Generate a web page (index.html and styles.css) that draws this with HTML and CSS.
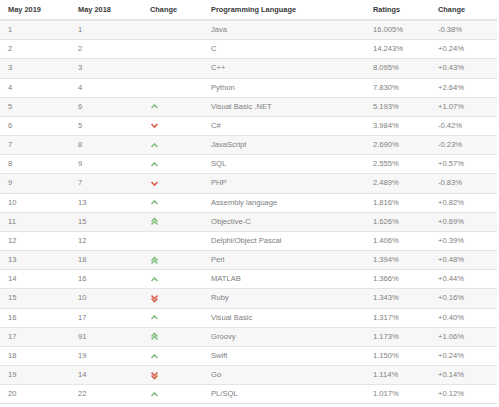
FILE: index.html
```html
<!DOCTYPE html>
<html>
<head>
<meta charset="utf-8">
<link rel="stylesheet" href="styles.css">
</head>
<body>
<table class="tiobe">
<colgroup>
<col class="c1"><col class="c2"><col class="c3"><col class="c4"><col class="c5"><col class="c6">
</colgroup>
<thead>
<tr><th>May 2019</th><th>May 2018</th><th>Change</th><th>Programming Language</th><th>Ratings</th><th>Change</th></tr>
</thead>
<tbody>
<tr><td>1</td><td>1</td><td></td><td>Java</td><td>16.005%</td><td>-0.38%</td></tr>
<tr><td>2</td><td>2</td><td></td><td>C</td><td>14.243%</td><td>+0.24%</td></tr>
<tr><td>3</td><td>3</td><td></td><td>C++</td><td>8.095%</td><td>+0.43%</td></tr>
<tr><td>4</td><td>4</td><td></td><td>Python</td><td>7.830%</td><td>+2.64%</td></tr>
<tr><td>5</td><td>6</td><td><svg class="ic up" viewBox="0 0 9 9"><path d="M1.5 6 L4.5 3 L7.5 6"/></svg></td><td>Visual Basic .NET</td><td>5.193%</td><td>+1.07%</td></tr>
<tr><td>6</td><td>5</td><td><svg class="ic dn" viewBox="0 0 9 9"><path d="M1.5 3 L4.5 6 L7.5 3"/></svg></td><td>C#</td><td>3.984%</td><td>-0.42%</td></tr>
<tr><td>7</td><td>8</td><td><svg class="ic up" viewBox="0 0 9 9"><path d="M1.5 6 L4.5 3 L7.5 6"/></svg></td><td>JavaScript</td><td>2.690%</td><td>-0.23%</td></tr>
<tr><td>8</td><td>9</td><td><svg class="ic up" viewBox="0 0 9 9"><path d="M1.5 6 L4.5 3 L7.5 6"/></svg></td><td>SQL</td><td>2.555%</td><td>+0.57%</td></tr>
<tr><td>9</td><td>7</td><td><svg class="ic dn" viewBox="0 0 9 9"><path d="M1.5 3 L4.5 6 L7.5 3"/></svg></td><td>PHP</td><td>2.489%</td><td>-0.83%</td></tr>
<tr><td>10</td><td>13</td><td><svg class="ic up" viewBox="0 0 9 9"><path d="M1.5 6 L4.5 3 L7.5 6"/></svg></td><td>Assembly language</td><td>1.816%</td><td>+0.82%</td></tr>
<tr><td>11</td><td>15</td><td><svg class="ic up2" viewBox="0 0 9 9"><path d="M1.5 4.5 L4.5 1.5 L7.5 4.5 M1.5 7.5 L4.5 4.5 L7.5 7.5"/></svg></td><td>Objective-C</td><td>1.626%</td><td>+0.69%</td></tr>
<tr><td>12</td><td>12</td><td></td><td>Delphi/Object Pascal</td><td>1.406%</td><td>+0.39%</td></tr>
<tr><td>13</td><td>18</td><td><svg class="ic up2" viewBox="0 0 9 9"><path d="M1.5 4.5 L4.5 1.5 L7.5 4.5 M1.5 7.5 L4.5 4.5 L7.5 7.5"/></svg></td><td>Perl</td><td>1.394%</td><td>+0.48%</td></tr>
<tr><td>14</td><td>16</td><td><svg class="ic up" viewBox="0 0 9 9"><path d="M1.5 6 L4.5 3 L7.5 6"/></svg></td><td>MATLAB</td><td>1.366%</td><td>+0.44%</td></tr>
<tr><td>15</td><td>10</td><td><svg class="ic dn2" viewBox="0 0 9 9"><path d="M1.5 1.5 L4.5 4.5 L7.5 1.5 M1.5 4.5 L4.5 7.5 L7.5 4.5"/></svg></td><td>Ruby</td><td>1.343%</td><td>+0.16%</td></tr>
<tr><td>16</td><td>17</td><td><svg class="ic up" viewBox="0 0 9 9"><path d="M1.5 6 L4.5 3 L7.5 6"/></svg></td><td>Visual Basic</td><td>1.317%</td><td>+0.40%</td></tr>
<tr><td>17</td><td>91</td><td><svg class="ic up2" viewBox="0 0 9 9"><path d="M1.5 4.5 L4.5 1.5 L7.5 4.5 M1.5 7.5 L4.5 4.5 L7.5 7.5"/></svg></td><td>Groovy</td><td>1.173%</td><td>+1.06%</td></tr>
<tr><td>18</td><td>19</td><td><svg class="ic up" viewBox="0 0 9 9"><path d="M1.5 6 L4.5 3 L7.5 6"/></svg></td><td>Swift</td><td>1.150%</td><td>+0.24%</td></tr>
<tr><td>19</td><td>14</td><td><svg class="ic dn2" viewBox="0 0 9 9"><path d="M1.5 1.5 L4.5 4.5 L7.5 1.5 M1.5 4.5 L4.5 7.5 L7.5 4.5"/></svg></td><td>Go</td><td>1.114%</td><td>+0.14%</td></tr>
<tr><td>20</td><td>22</td><td><svg class="ic up" viewBox="0 0 9 9"><path d="M1.5 6 L4.5 3 L7.5 6"/></svg></td><td>PL/SQL</td><td>1.017%</td><td>+0.12%</td></tr>
</tbody>
</table>
</body>
</html>
```
FILE: styles.css
```css
html, body {
  margin: 0;
  padding: 0;
  background: #ffffff;
}
.tiobe {
  width: 497px;
  border-collapse: collapse;
  font-family: "Liberation Sans", Arial, sans-serif;
  font-size: 7.6px;
  color: #808080;
  table-layout: fixed;
  border-bottom: 1px solid #e4e4e4;
}
.c1 { width: 70px; }
.c2 { width: 72px; }
.c3 { width: 61px; }
.c4 { width: 162px; }
.c5 { width: 65px; }
.c6 { width: 67px; }
.tiobe th {
  text-align: left;
  font-weight: bold;
  color: #3a3a3a;
  font-size: 7.4px;
  height: 19px;
  padding: 0 8px;
  border-bottom: 2px solid #e4e4e4;
  vertical-align: middle;
}
.tiobe td {
  height: 18.18px;
  padding: 0 8px;
  border-top: 1px solid #e4e4e4;
  vertical-align: middle;
  line-height: 10px;
}
.tiobe tbody tr:nth-child(odd) td {
  background: #f7f7f7;
}
.ic {
  display: block;
  width: 9px;
  height: 9px;
  fill: none;
  stroke-width: 1.6;
}
.up, .up2 { stroke: #82c082; }
.dn, .dn2 { stroke: #d8604a; }
```
